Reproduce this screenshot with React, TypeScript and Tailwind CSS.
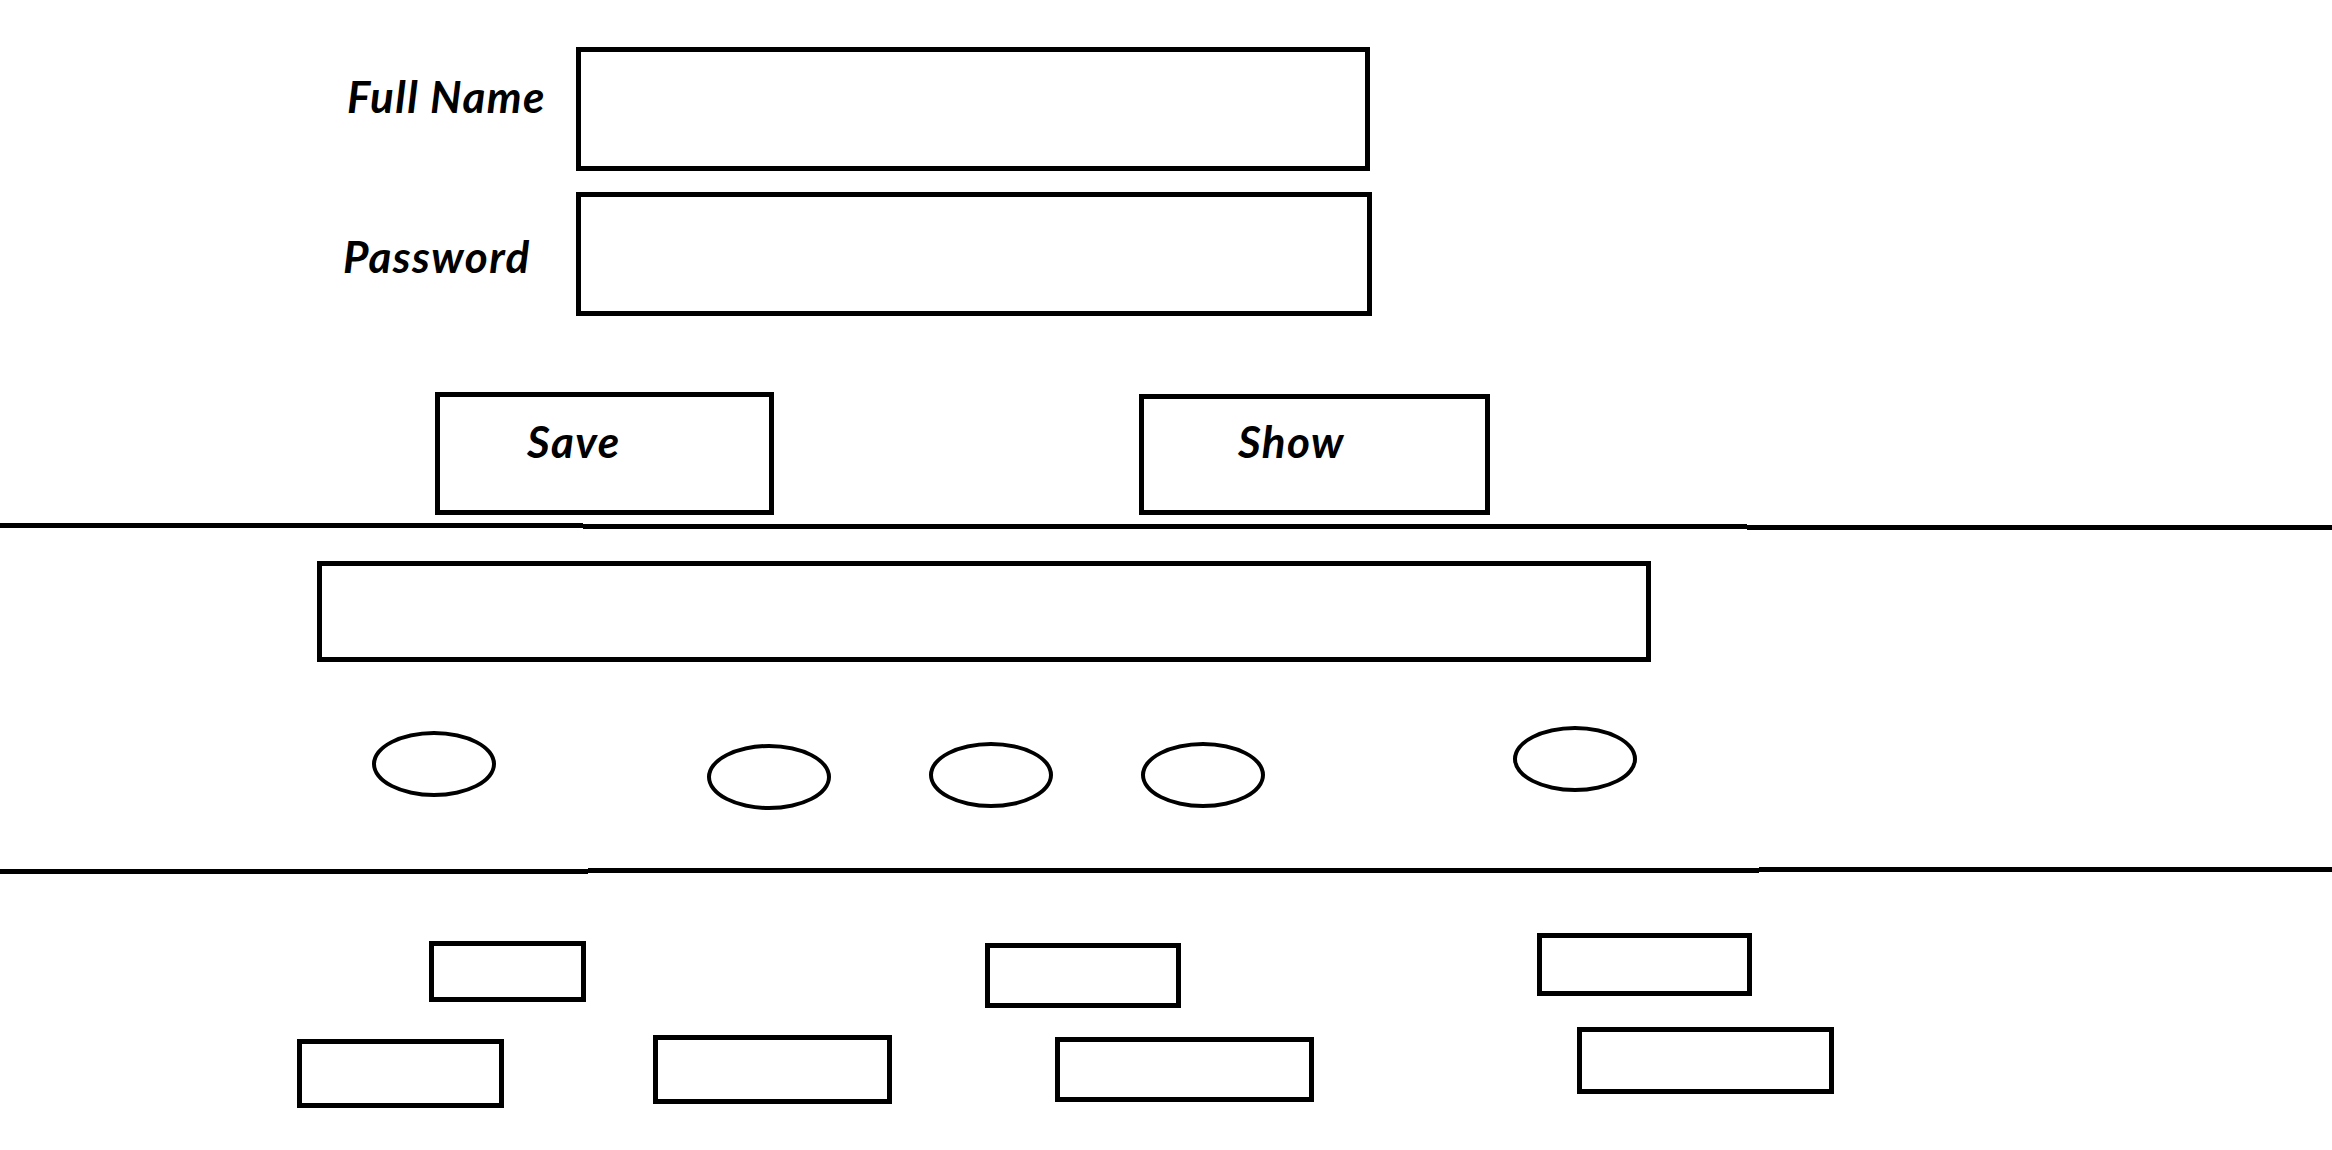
import type { ReactNode } from 'react';

function Rule({ widths, offsets }: { widths: string[]; offsets: string[] }) {
	// hand-drawn divider: three slightly offset segments
	return (
		<div className="flex items-start">
			<div className={`h-[5px] bg-black ${widths[0]} ${offsets[0]}`} />
			<div className={`h-[5px] bg-black ${widths[1]} ${offsets[1]}`} />
			<div className={`h-[5px] flex-1 bg-black ${offsets[2]}`} />
		</div>
	);
}

function Oval({ className }: { className: string }) {
	return <div className={`h-[66px] w-[124px] shrink-0 rounded-[50%] border-4 border-black ${className}`} />;
}

function Box({ className }: { className: string }) {
	return <div className={`shrink-0 border-[5px] border-black ${className}`} />;
}

function Label({ children, className }: { children: ReactNode; className: string }) {
	return (
		<label className={`block text-[44px] leading-[52px] font-bold italic tracking-[1.4px] text-black ${className}`}>
			{children}
		</label>
	);
}

export default function App() {
	return (
		<div className="min-h-screen w-[2332px] overflow-hidden bg-white font-['Lato',sans-serif]">
			{/* form */}
			<div className="flex items-start pt-[47px] pl-[341px]">
				<div className="w-[235px] pt-[23px]">
					<Label className="pl-[6px]">Full Name</Label>
				</div>
				<input className="h-[124px] w-[794px] border-[5px] border-black outline-none" />
			</div>
			<div className="mt-[21px] flex items-start pl-[341px]">
				<div className="w-[235px] pt-[38px]">
					<Label className="pl-[2px]">Password</Label>
				</div>
				<input type="password" className="h-[124px] w-[796px] border-[5px] border-black outline-none" />
			</div>

			<div className="mt-[76px] flex items-start">
				<button className="ml-[435px] flex h-[123px] w-[339px] items-start border-[5px] border-black pt-[18px] pl-[87px]">
					<Label className="">Save</Label>
				</button>
				<button className="mt-[2px] ml-[365px] flex h-[121px] w-[351px] items-start border-[5px] border-black pt-[16px] pl-[94px]">
					<Label className="">Show</Label>
				</button>
			</div>

			<div className="mt-[8px]">
				<Rule widths={['w-[583px]', 'w-[1164px]']} offsets={['mt-0', 'mt-[1px]', 'mt-[2px]']} />
			</div>

			{/* middle section */}
			<div className="mt-[31px] ml-[317px] h-[101px] w-[1334px] border-[5px] border-black" />
			<div className="mt-[64px] flex items-start">
				<Oval className="mt-[5px] ml-[372px]" />
				<Oval className="mt-[18px] ml-[211px]" />
				<Oval className="mt-[16px] ml-[98px]" />
				<Oval className="mt-[16px] ml-[88px]" />
				<Oval className="mt-0 ml-[248px]" />
			</div>

			<div className="mt-[57px]">
				<Rule widths={['w-[588px]', 'w-[1171px]']} offsets={['mt-[2px]', 'mt-[1px]', 'mt-0']} />
			</div>

			{/* bottom section */}
			<div className="mt-[59px] flex items-start">
				<Box className="mt-[8px] ml-[429px] h-[61px] w-[157px]" />
				<Box className="mt-[10px] ml-[399px] h-[65px] w-[196px]" />
				<Box className="mt-0 ml-[356px] h-[63px] w-[215px]" />
			</div>
			<div className="mt-[19px] flex items-start">
				<Box className="mt-[12px] ml-[297px] h-[69px] w-[207px]" />
				<Box className="mt-[8px] ml-[149px] h-[69px] w-[239px]" />
				<Box className="mt-[10px] ml-[163px] h-[65px] w-[259px]" />
				<Box className="mt-0 ml-[263px] h-[67px] w-[257px]" />
			</div>
		</div>
	);
}
